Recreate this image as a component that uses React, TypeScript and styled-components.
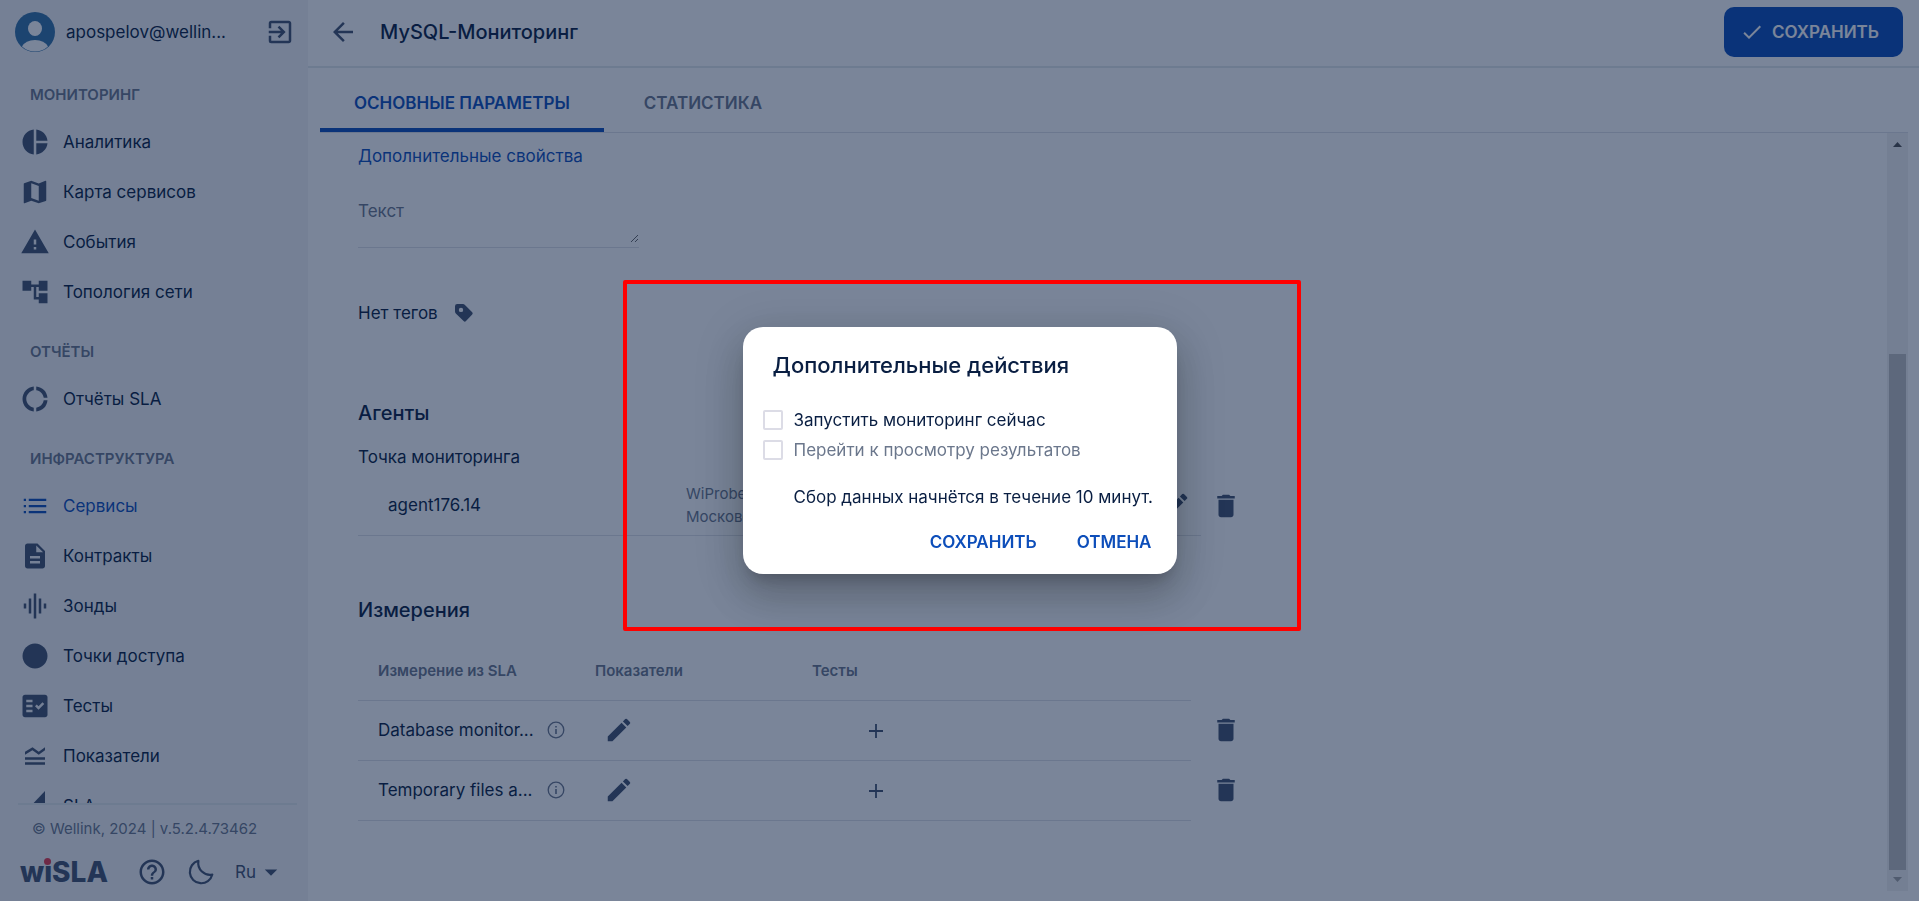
import React from "react";
import styled, { createGlobalStyle, css } from "styled-components";
import type { IconType } from "react-icons";
import {
  MdAccountTree,
  MdArrowBack,
  MdArrowDropDown,
  MdCheck,
  MdCircle,
  MdDelete,
  MdDescription,
  MdDonutLarge,
  MdEdit,
  MdExitToApp,
  MdFactCheck,
  MdGraphicEq,
  MdHelpOutline,
  MdLegendToggle,
  MdMap,
  MdPieChart,
  MdWarning,
} from "react-icons/md";

const color = {
  text: "#091e42",
  icon: "#42526e",
  muted: "#6b778c",
  primary: "#0d4eba",
  side: "#f4f5f7",
  line: "#dfe1e6",
  divider: "#e2eaec",
};

const GlobalStyle = createGlobalStyle`
  *, *::before, *::after { box-sizing: border-box; }
  body {
    margin: 0;
    font-family: Inter, "Noto Sans", sans-serif;
    font-size: 17px;
    line-height: 24px;
    color: ${color.text};
    background: #fff;
  }
  button, input, textarea { font: inherit; color: inherit; }
  h1, h2, p, ul { margin: 0; padding: 0; }
  ul { list-style: none; }
`;

const Page = styled.div`
  display: flex;
  height: 100vh;
  overflow: hidden;
`;

const bareButton = css`
  display: inline-flex;
  align-items: center;
  justify-content: center;
  padding: 0;
  border: 0;
  background: none;
  cursor: pointer;
`;

const IconButton = styled.button`
  ${bareButton}
  flex: none;
  vertical-align: middle;
  color: ${color.icon};
  svg { display: block; }
`;

/* Sidebar */

const Sidebar = styled.aside`
  flex: none;
  display: flex;
  flex-direction: column;
  width: 308px;
  background: ${color.side};
`;

const UserBar = styled.div`
  flex: none;
  display: flex;
  align-items: center;
  height: 64px;
  padding: 0 13px 0 15px;
`;

const UserName = styled.span`
  flex: 1;
  margin-left: 11px;
`;

const Nav = styled.nav`
  flex: 1;
  min-height: 0;
  margin-top: -4px;
  overflow: hidden;
`;

const NavHeading = styled.h2`
  padding: 24px 30px 11px;
  font-size: 15px;
  line-height: 22px;
  font-weight: 600;
  color: ${color.muted};
`;

const NavLink = styled.a<{ $active?: boolean }>`
  display: flex;
  align-items: center;
  gap: 13px;
  height: 50px;
  padding-left: 20px;
  text-decoration: none;
  color: ${(p) => (p.$active ? color.primary : color.text)};
  svg {
    flex: none;
    color: ${(p) => (p.$active ? color.primary : color.icon)};
  }
`;

const SideFooter = styled.footer`
  flex: none;
  margin: 0 11px 0 18px;
  border-top: 2px solid ${color.divider};
`;

const Copyright = styled.p`
  padding: 12px 0 0 14px;
  font-size: 15px;
  color: ${color.muted};
`;

const FooterTools = styled.div`
  display: flex;
  align-items: center;
  height: 60px;
  padding-top: 2px;
  color: ${color.icon};
`;

const Logo = styled.span`
  position: relative;
  flex: none;
  width: 119px;
  padding-left: 2px;
  font-size: 28px;
  font-weight: 800;
`;

const LogoDot = styled.span`
  position: absolute;
  left: 26px;
  top: -2px;
  width: 7px;
  height: 7px;
  border-radius: 50%;
  background: #e8384a;
`;

const FooterButtons = styled.div`
  display: flex;
  align-items: center;
  gap: 19px;
`;

const LangButton = styled.button`
  ${bareButton}
  color: ${color.icon};
`;

/* Main column */

const Main = styled.main`
  flex: 1;
  min-width: 0;
  display: flex;
  flex-direction: column;
`;

const TopBar = styled.header`
  flex: none;
  display: flex;
  align-items: center;
  height: 68px;
  padding: 0 16px 2px 20px;
  border-bottom: 2px solid ${color.divider};
`;

const Title = styled.h1`
  flex: 1;
  margin-left: 22px;
  font-size: 20px;
  font-weight: 500;
`;

const SaveButton = styled.button`
  ${bareButton}
  gap: 8px;
  height: 50px;
  padding: 0 24px 0 16px;
  border-radius: 10px;
  font-weight: 600;
  color: #fff;
  background: ${color.primary};
`;

const Tabs = styled.div`
  flex: none;
  display: flex;
  gap: 6px;
  height: 65px;
  margin: 0 11px 0 12px;
  border-bottom: 1px solid ${color.line};
`;

const Tab = styled.button<{ $active?: boolean }>`
  ${bareButton}
  padding: 10px 34px 0;
  border-bottom: 4px solid ${(p) => (p.$active ? color.primary : "transparent")};
  font-weight: 600;
  color: ${(p) => (p.$active ? color.primary : color.muted)};
`;

const ScrollPane = styled.div`
  flex: 1;
  min-height: 0;
  display: flex;
  margin: 0 11px 10px 50px;
`;

const Content = styled.div`
  flex: 1;
  min-width: 0;
  padding-top: 11px;
  overflow: hidden;
`;

const ScrollTrack = styled.div`
  flex: none;
  display: flex;
  flex-direction: column;
  align-items: center;
  width: 21px;
  background: #f1f1f1;
`;

const ScrollArrow = styled.svg<{ $dim?: boolean }>`
  flex: none;
  width: 21px;
  height: 21px;
  fill: ${(p) => (p.$dim ? "#a3a3a3" : "#505050")};
`;

const ScrollSpace = styled.div`
  flex: 200;
`;

const ScrollThumb = styled.div`
  flex: 516;
  width: 17px;
  background: #c1c1c1;
`;

const PropsLink = styled.a`
  display: block;
  width: fit-content;
  text-decoration: none;
  color: ${color.primary};
`;

const Field = styled.div`
  width: fit-content;
  margin-top: 31px;
  padding-bottom: 4px;
  border-bottom: 1px solid ${color.line};
`;

const TextArea = styled.textarea`
  display: block;
  width: 281px;
  height: 44px;
  padding: 0;
  border: 0;
  outline: 0;
  background: none;
  &::placeholder { color: ${color.muted}; opacity: 1; }
`;

const TagRow = styled.div`
  display: flex;
  align-items: center;
  gap: 16px;
  height: 24px;
  margin-top: 53px;
`;

const SectionTitle = styled.h2<{ $gap: number }>`
  margin-top: ${(p) => p.$gap}px;
  font-size: 20px;
  font-weight: 500;
`;

const FieldLabel = styled.p`
  margin-top: 20px;
`;

const AgentLine = styled.div`
  display: flex;
  align-items: center;
  gap: 10px;
  margin-top: 6px;
`;

const Agent = styled.div`
  display: grid;
  grid-template-columns: 298px 1fr auto;
  align-items: center;
  width: 843px;
  height: 61px;
  padding: 0 10px 0 30px;
  border-bottom: 1px solid ${color.line};
`;

const AgentInfo = styled.div`
  font-size: 15px;
  line-height: 23px;
  color: ${color.muted};
`;

const Measures = styled.table`
  width: 903px;
  margin-top: 18px;
  border-collapse: collapse;
  table-layout: fixed;
`;

const HeadCell = styled.th`
  height: 60px;
  padding: 2px 0 0 20px;
  border-bottom: 1px solid ${color.line};
  text-align: left;
  font-size: 15px;
  font-weight: 600;
  color: ${color.muted};
`;

const Cell = styled.td<{ $indent?: number }>`
  height: 60px;
  padding: 0 0 0 ${(p) => p.$indent ?? 20}px;
  border-bottom: 1px solid ${color.line};
`;

const ActionCell = styled.td`
  padding: 0 20px;
`;

const Measure = styled.div`
  display: flex;
  align-items: center;
  gap: 9px;
`;

const MeasureName = styled.span`
  width: 160px;
  white-space: nowrap;
`;

/* Dialog */

const Overlay = styled.div`
  position: fixed;
  inset: 0;
  display: flex;
  align-items: center;
  justify-content: center;
  background: rgba(9, 30, 66, 0.54);
`;

const Dialog = styled.section`
  position: relative;
  width: 434px;
  padding: 26px 20px 17px;
  border-radius: 20px;
  background: #fff;
  box-shadow: 0 11px 15px -7px rgba(0, 0, 0, 0.2),
    0 24px 38px 3px rgba(0, 0, 0, 0.14), 0 9px 46px 8px rgba(0, 0, 0, 0.12);
`;

const Highlight = styled.div`
  position: absolute;
  inset: -47px -124px -57px -120px;
  border: 4px solid #f00;
  border-radius: 2px;
  pointer-events: none;
`;

const DialogTitle = styled.h2`
  padding-left: 10px;
  margin-bottom: 28px;
  font-size: 22px;
  font-weight: 500;
`;

const Option = styled.label<{ $off?: boolean }>`
  display: flex;
  align-items: center;
  gap: 11px;
  height: 30px;
  color: ${(p) => (p.$off ? color.muted : color.text)};
`;

const Box = styled.input`
  appearance: none;
  flex: none;
  width: 20px;
  height: 20px;
  margin: 0;
  border: 2px solid #dcdce6;
  border-radius: 2px;
  background: #fff;
`;

const Note = styled.p`
  margin-top: 20px;
  padding-left: 31px;
  white-space: nowrap;
`;

const DialogActions = styled.div`
  display: flex;
  justify-content: flex-end;
  gap: 40px;
  margin-top: 18px;
  padding-right: 5px;
`;

const TextButton = styled.button`
  ${bareButton}
  height: 30px;
  font-weight: 600;
  color: ${color.primary};
`;

/* Drawings */

const Avatar = () => (
  <svg width="40" height="40" viewBox="0 0 40 40" aria-hidden="true">
    <circle cx="20" cy="20" r="20" fill="#3471a6" />
    <ellipse cx="20" cy="16.500" rx="7" ry="7.500" fill="#fff" />
    <path d="M7 34.500a14 10.500 0 0 1 26 0a19.300 19.300 0 0 1-26 0z" fill="#fff" />
  </svg>
);

const ListIcon = ({ size = 30 }: { size?: number | string }) => (
  <svg width={size} height={size} viewBox="0 0 24 24" fill="currentColor" aria-hidden="true">
    <path d="M3 6.200h1.800V8H3zM7 6.200h14V8H7zM3 11.100h1.800v1.800H3zM7 11.100h14v1.800H7zM3 16h1.800v1.800H3zM7 16h14v1.800H7z" />
  </svg>
);

const SlaIcon = ({ size = 30 }: { size?: number | string }) => (
  <svg width={size} height={size} viewBox="0 0 24 24" fill="currentColor" aria-hidden="true">
    <path d="M20 0v20H1z" />
  </svg>
);

const MoonIcon = () => (
  <svg width="30" height="30" viewBox="0 0 30 30" fill="none" stroke="currentColor" strokeWidth="2.200" strokeLinejoin="round" aria-hidden="true">
    <path d="M12.400 3.800A11.400 11.400 0 1 0 26.300 17.600C18.500 19 11 12.500 12.400 3.800z" />
  </svg>
);

const TagIcon = () => (
  <svg width="20" height="20" viewBox="0 0 20 20" fill="currentColor" aria-hidden="true">
    <path fillRule="evenodd" d="M3.200 1H9q1 0 1.700.7l7.500 7.600q1.100 1.100 0 2.200l-6.200 6.600q-1.200 1.200-2.400 0L1.800 10.500Q1 9.700 1 8.500V3.200Q1 1 3.200 1zM7 4.700a2.200 2.200 0 1 0 0 4.400 2.200 2.200 0 0 0 0-4.400z" />
  </svg>
);

const InfoIcon = () => (
  <svg width="18" height="18" viewBox="0 0 18 18" fill="none" stroke={color.muted} aria-hidden="true">
    <circle cx="9" cy="9" r="7.800" strokeWidth="1.300" />
    <path d="M9 8v5M9 5v1.600" strokeWidth="1.600" />
  </svg>
);

const PlusIcon = () => (
  <svg width="14" height="14" viewBox="0 0 14 14" stroke="currentColor" strokeWidth="1.800" aria-hidden="true">
    <path d="M7 0v14M0 7h14" />
  </svg>
);

type NavItem = { label: string; icon: IconType | typeof ListIcon; active?: boolean };

const sections: { title: string; items: NavItem[] }[] = [
  {
    title: "МОНИТОРИНГ",
    items: [
      { label: "Аналитика", icon: MdPieChart },
      { label: "Карта сервисов", icon: MdMap },
      { label: "События", icon: MdWarning },
      { label: "Топология сети", icon: MdAccountTree },
    ],
  },
  { title: "ОТЧЁТЫ", items: [{ label: "Отчёты SLA", icon: MdDonutLarge }] },
  {
    title: "ИНФРАСТРУКТУРА",
    items: [
      { label: "Сервисы", icon: ListIcon, active: true },
      { label: "Контракты", icon: MdDescription },
      { label: "Зонды", icon: MdGraphicEq },
      { label: "Точки доступа", icon: MdCircle },
      { label: "Тесты", icon: MdFactCheck },
      { label: "Показатели", icon: MdLegendToggle },
      { label: "SLA", icon: SlaIcon },
    ],
  },
];

const measures = ["Database monitor...", "Temporary files a..."];

export default function App() {
  return (
    <>
      <GlobalStyle />
      <Page>
        <Sidebar>
          <UserBar>
            <Avatar />
            <UserName>apospelov@wellin...</UserName>
            <IconButton aria-label="Выйти">
              <MdExitToApp size={30} />
            </IconButton>
          </UserBar>
          <Nav>
            {sections.map((section) => (
              <React.Fragment key={section.title}>
                <NavHeading>{section.title}</NavHeading>
                <ul>
                  {section.items.map(({ label, icon: Icon, active }) => (
                    <li key={label}>
                      <NavLink href="#" $active={active}>
                        <Icon size={30} />
                        {label}
                      </NavLink>
                    </li>
                  ))}
                </ul>
              </React.Fragment>
            ))}
          </Nav>
          <SideFooter>
            <Copyright>© Wellink, 2024 | v.5.2.4.73462</Copyright>
            <FooterTools>
              <Logo>
                wiSLA
                <LogoDot />
              </Logo>
              <FooterButtons>
                <IconButton aria-label="Справка">
                  <MdHelpOutline size={30} />
                </IconButton>
                <IconButton aria-label="Тёмная тема">
                  <MoonIcon />
                </IconButton>
                <LangButton>
                  Ru
                  <MdArrowDropDown size={30} />
                </LangButton>
              </FooterButtons>
            </FooterTools>
          </SideFooter>
        </Sidebar>

        <Main>
          <TopBar>
            <IconButton aria-label="Назад">
              <MdArrowBack size={30} />
            </IconButton>
            <Title>MySQL-Мониторинг</Title>
            <SaveButton>
              <MdCheck size={24} />
              СОХРАНИТЬ
            </SaveButton>
          </TopBar>
          <Tabs role="tablist">
            <Tab role="tab" aria-selected="true" $active>
              ОСНОВНЫЕ ПАРАМЕТРЫ
            </Tab>
            <Tab role="tab" aria-selected="false">
              СТАТИСТИКА
            </Tab>
          </Tabs>
          <ScrollPane>
            <Content>
              <PropsLink href="#">Дополнительные свойства</PropsLink>
              <Field>
                <TextArea placeholder="Текст" aria-label="Текст" />
              </Field>
              <TagRow>
                Нет тегов
                <IconButton aria-label="Изменить теги">
                  <TagIcon />
                </IconButton>
              </TagRow>

              <SectionTitle $gap={76}>Агенты</SectionTitle>
              <FieldLabel>Точка мониторинга</FieldLabel>
              <AgentLine>
                <Agent>
                  <span>agent176.14</span>
                  <AgentInfo>
                    WiProbe
                    <br />
                    Московское
                  </AgentInfo>
                  <IconButton aria-label="Изменить агента">
                    <MdEdit size={30} />
                  </IconButton>
                </Agent>
                <IconButton aria-label="Удалить агента">
                  <MdDelete size={30} />
                </IconButton>
              </AgentLine>

              <SectionTitle $gap={62}>Измерения</SectionTitle>
              <Measures>
                <colgroup>
                  <col width="217" />
                  <col width="217" />
                  <col />
                  <col width="70" />
                </colgroup>
                <thead>
                  <tr>
                    <HeadCell>Измерение из SLA</HeadCell>
                    <HeadCell>Показатели</HeadCell>
                    <HeadCell>Тесты</HeadCell>
                    <td />
                  </tr>
                </thead>
                <tbody>
                  {measures.map((name) => (
                    <tr key={name}>
                      <Cell>
                        <Measure>
                          <MeasureName>{name}</MeasureName>
                          <InfoIcon />
                        </Measure>
                      </Cell>
                      <Cell $indent={29}>
                        <IconButton aria-label="Изменить показатели">
                          <MdEdit size={30} />
                        </IconButton>
                      </Cell>
                      <Cell $indent={77}>
                        <IconButton aria-label="Добавить тест">
                          <PlusIcon />
                        </IconButton>
                      </Cell>
                      <ActionCell>
                        <IconButton aria-label="Удалить измерение">
                          <MdDelete size={30} />
                        </IconButton>
                      </ActionCell>
                    </tr>
                  ))}
                </tbody>
              </Measures>
            </Content>
            <ScrollTrack aria-hidden="true">
              <ScrollArrow viewBox="0 0 21 21">
                <path d="M6 14h9l-4.500-5z" />
              </ScrollArrow>
              <ScrollSpace />
              <ScrollThumb />
              <ScrollArrow viewBox="0 0 21 21" $dim>
                <path d="M6 7h9l-4.500 5z" />
              </ScrollArrow>
            </ScrollTrack>
          </ScrollPane>
        </Main>
      </Page>

      <Overlay>
        <Dialog role="dialog" aria-modal="true" aria-labelledby="dialog-title">
          <DialogTitle id="dialog-title">Дополнительные действия</DialogTitle>
          <Option>
            <Box type="checkbox" />
            Запустить мониторинг сейчас
          </Option>
          <Option $off>
            <Box type="checkbox" disabled />
            Перейти к просмотру результатов
          </Option>
          <Note>Сбор данных начнётся в течение 10 минут.</Note>
          <DialogActions>
            <TextButton>СОХРАНИТЬ</TextButton>
            <TextButton>ОТМЕНА</TextButton>
          </DialogActions>
          <Highlight />
        </Dialog>
      </Overlay>
    </>
  );
}
